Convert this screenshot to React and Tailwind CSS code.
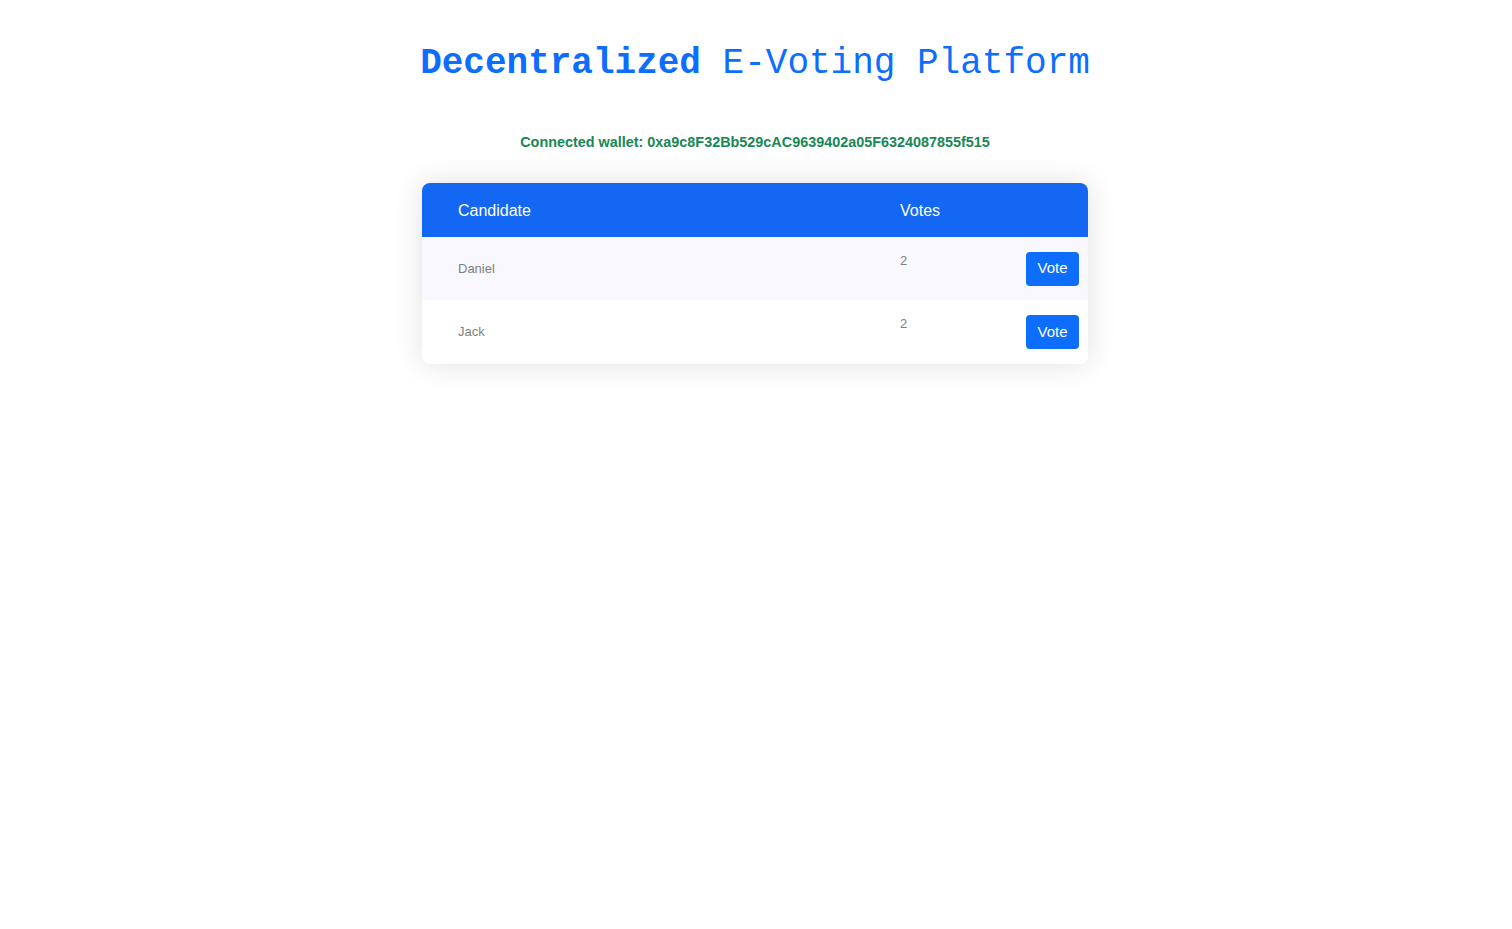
import React from 'react';

const candidates = [
    { name: 'Daniel', votes: 2 },
    { name: 'Jack', votes: 2 },
];

export default function App() {
    return (
        <div className="min-h-screen bg-white flex flex-col items-center pt-[42px] pr-[2px]">
            <h1 className="text-[36px] leading-[44px] text-[#0d6efd]" style={{ fontFamily: '"Liberation Mono", monospace' }}>
                <span className="font-bold">Decentralized</span> E-Voting Platform
            </h1>

            <p className="mt-[47px] text-[14.4px] leading-[18px] font-bold text-[#198754]" style={{ fontFamily: '"Liberation Sans", Arial, sans-serif' }}>
                Connected wallet: 0xa9c8F32Bb529cAC9639402a05F6324087855f515
            </p>

            <div
                className="mt-[32px] w-[666px] rounded-[8px] bg-white overflow-hidden shadow-[0_0_30px_rgba(0,0,0,0.12)]"
                style={{ fontFamily: '"Liberation Sans", Arial, sans-serif' }}
            >
                <div className="grid grid-cols-[478px_1fr_auto] h-[54px] items-center pt-px bg-[#1467f3] text-white text-[16px]">
                    <div className="pl-[36px]">Candidate</div>
                    <div>Votes</div>
                    <div className="w-[62px]" />
                </div>
                {candidates.map((c, i) => (
                    <div
                        key={c.name}
                        className={`grid grid-cols-[478px_1fr_auto] items-center ${i % 2 === 0 ? 'h-[63px] bg-[#f8f8fe]' : 'h-[64px] bg-white'}`}
                    >
                        <div className="pl-[36px] text-[13px] text-[#808080]">{c.name}</div>
                        <div className="self-start pt-[14px] text-[13px] text-[#808080]">{c.votes}</div>
                        <div className="pr-[9px]">
                            <button className="h-[34px] w-[53px] rounded-[4px] bg-[#0d6efd] text-white text-[15px]">
                                Vote
                            </button>
                        </div>
                    </div>
                ))}
            </div>
        </div>
    );
}
